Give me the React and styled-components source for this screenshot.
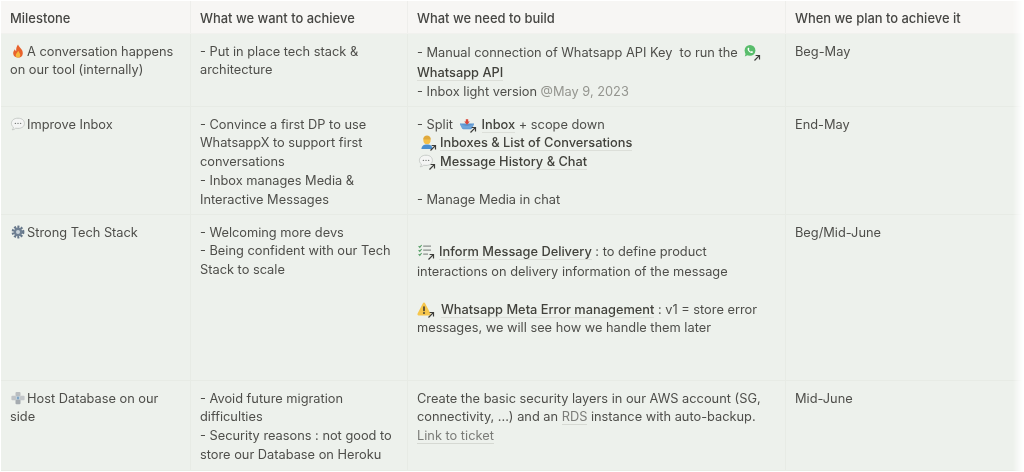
import React from 'react';
import styled, { createGlobalStyle } from 'styled-components';

const GlobalStyle = createGlobalStyle`
    html, body {
        margin: 0;
        padding: 0;
        background: #ffffff;
    }
    body {
        width: 1024px;
        height: 472px;
        overflow: hidden;
        font-family: Inter, "Liberation Sans", sans-serif;
    }
`;

const Page = styled.div`
    padding: 1px 0 0 1px;
    width: 1023px;
    box-sizing: border-box;
`;

const Table = styled.div`
    width: 1022px;
    filter: blur(0.4px);
    mask-image: linear-gradient(to right, #000 99%, transparent 100%);
`;

const Row = styled.div`
    display: grid;
    grid-template-columns: 190px 217px 378px 237px;
    height: ${props => props.height}px;
    box-sizing: border-box;
    background: ${props => props.head ? '#f7f6f4' : '#edf1ec'};
    border-bottom: 1px solid ${props => props.head ? '#f1f1ee' : '#e7ebe5'};
`;

const Cell = styled.div`
    padding: ${props => props.head ? '8px' : '8.6px'} 9px 0 9px;
    border-right: 1px solid ${props => props.head ? '#eeeeeb' : '#e7ebe5'};
    font-size: ${props => props.head ? '12.95px' : '12.8px'};
    line-height: 18.8px;
    font-weight: ${props => props.head ? 500 : 400};
    color: ${props => props.head ? '#464643' : '#4e4e4a'};
    overflow: hidden;
    &:last-child {
        border-right: none;
    }
`;

const Line = styled.div`
    min-height: 18.8px;
    line-height: ${props => props.tall ? '20px' : '18.8px'};
`;

const Gap = styled.div`
    height: ${props => props.size}px;
`;

const Mention = styled.span`
    font-weight: 500;
    color: #42423c;
    border-bottom: 1px solid #dcdfd9;
`;

const Muted = styled.span`
    color: #94958f;
`;

const SoftLink = styled.span`
    color: #7b7c78;
    border-bottom: 1px solid #d6d9d3;
`;

const Glyph = styled.span`
    position: relative;
    display: inline-block;
    width: 16px;
    height: 16px;
    margin-left: ${props => props.lead || 0}px;
    margin-right: ${props => props.gap || 1}px;
    vertical-align: -3px;
    svg {
        display: block;
        width: 16px;
        height: 16px;
    }
`;

const ArrowMark = styled.svg`
    position: absolute;
    right: -2px;
    bottom: -2px;
    && {
        width: 8px;
        height: 8px;
    }
`;

const Icon = ({ children, linked, gap, lead }) => (
    <Glyph gap={gap} lead={lead}>
        <svg viewBox="0 0 16 16">{children}</svg>
        {linked && (
            <ArrowMark viewBox="0 0 8 8">
                <path d="M1.5 6.5 L6.3 1.7 M2.6 1.5 H6.5 V5.4" fill="none" stroke="#3d3d3a" strokeWidth="1.2" />
            </ArrowMark>
        )}
    </Glyph>
);

const Fire = () => (
    <Icon>
        <path d="M8 1.5 C9 4.4 13 6 12.8 10.4 C12.6 13.4 10.4 14.6 8 14.6 C5.4 14.6 3.3 13.2 3.2 10.6 C3.1 8.6 4 7.4 4.8 6.2 C5.1 7.2 5.5 7.8 6.2 8 C6 5.6 6.6 3.2 8 1.5 Z" fill="#e8622c" />
        <path d="M8.2 7.8 C8.8 9.4 10.4 10.4 10.3 12.2 C10.2 13.6 9.2 14.5 8 14.5 C6.6 14.5 5.7 13.6 5.7 12.4 C5.7 10.6 7.6 9.6 8.2 7.8 Z" fill="#f6b73c" />
    </Icon>
);

const Bubble = ({ linked, gap, lead }) => (
    <Icon linked={linked} gap={gap} lead={lead}>
        <path d="M8 2.2 C12 2.2 14.4 4.4 14.4 7.4 C14.4 10.4 12 12.4 8 12.4 C7.2 12.4 6.4 12.3 5.7 12.2 C4.8 13.2 3.4 13.8 2.2 13.8 C3 13 3.4 12 3.4 11.1 C2.2 10.2 1.4 8.9 1.4 7.4 C1.4 4.4 4 2.2 8 2.2 Z" fill="#f4f5f4" stroke="#c2c6c3" strokeWidth="0.9" />
        <circle cx="5.4" cy="7.4" r="0.7" fill="#777b79" />
        <circle cx="8" cy="7.4" r="0.7" fill="#777b79" />
        <circle cx="10.6" cy="7.4" r="0.7" fill="#777b79" />
    </Icon>
);

const Gear = () => (
    <Icon>
        <circle cx="8" cy="8" r="5" fill="none" stroke="#66778a" strokeWidth="2.8" strokeDasharray="1.9 1.3" />
        <circle cx="8" cy="8" r="4.4" fill="#6f8093" />
        <circle cx="8" cy="8" r="2" fill="#c9d2da" />
    </Icon>
);

const Pinwheel = () => (
    <Icon>
        <rect x="5.5" y="2" width="5" height="4.6" rx="1" fill="#b9bdc0" />
        <rect x="1.4" y="5.8" width="4.6" height="4.4" rx="1" fill="#c0c4c7" />
        <rect x="10" y="5.8" width="4.6" height="4.4" rx="1" fill="#c3c7ca" />
        <rect x="5.5" y="9.6" width="5" height="4.6" rx="1" fill="#a5abb0" />
        <rect x="6.6" y="6.6" width="2.8" height="2.8" fill="#7ea4c6" />
    </Icon>
);

const WhatsappGlyph = () => (
    <Icon linked gap={0} lead={2}>
        <circle cx="7" cy="6.4" r="5.4" fill="#58bd6b" />
        <path d="M1.8 12.6 L2.8 9 L5 11 Z" fill="#58bd6b" />
        <path d="M4.8 4 C5.2 3.5 5.8 3.6 6 4.1 L6.4 5 L5.9 5.7 C6.3 6.6 7 7.3 8 7.7 L8.7 7.1 L9.7 7.6 C10 7.8 10 8.3 9.6 8.7 C8.9 9.3 7.8 9.1 6.6 8.3 C5.2 7.3 4 5.2 4.8 4 Z" fill="#ffffff" />
    </Icon>
);

const Tray = () => (
    <Icon linked gap={7} lead={2}>
        <path d="M1 7.5 H15 L12.6 12.6 C12.4 13 12 13.2 11.6 13.2 H4.4 C4 13.2 3.6 13 3.4 12.6 Z" fill="#5b93cf" />
        <path d="M1 7.5 C4 9 5 10 8 10 C11 10 12 9 15 7.5 L15 8.6 L12.8 12.8 H3.2 L1 8.6 Z" fill="#6fa5da" />
        <rect x="6.8" y="3.2" width="2.4" height="4" fill="#d9473b" />
        <path d="M5.2 5.6 H10.8 L8 8.8 Z" fill="#d9473b" />
    </Icon>
);

const Worker = () => (
    <Icon linked gap={5} lead={2}>
        <path d="M2.4 15 C2.6 11.6 4.8 10.4 8 10.4 C11.2 10.4 13.4 11.6 13.6 15 Z" fill="#4b8fd0" />
        <circle cx="8" cy="6.4" r="3.6" fill="#f5c04a" />
        <path d="M4.2 5.4 C4.2 2.6 6 1.4 8 1.4 C10 1.4 11.8 2.6 11.8 5.4 Z" fill="#e0a93c" />
    </Icon>
);

const Checklist = () => (
    <Icon linked gap={6}>
        <path d="M1.6 3.2 L2.8 4.4 L4.6 2 M1.6 7.2 L2.8 8.4 L4.6 6 M1.6 11.2 L2.8 12.4 L4.6 10" fill="none" stroke="#5aa06a" strokeWidth="1.1" />
        <path d="M6.2 3.2 H14 M6.2 7.2 H14 M6.2 11.2 H11" fill="none" stroke="#8a908c" strokeWidth="1.2" />
    </Icon>
);

const Warning = () => (
    <Icon linked gap={8}>
        <path d="M7 1.6 C7.5 1.6 7.9 1.9 8.2 2.4 L13.4 12.6 C13.9 13.5 13.3 14.4 12.4 14.4 H1.6 C0.7 14.4 0.1 13.5 0.6 12.6 L5.8 2.4 C6.1 1.9 6.5 1.6 7 1.6 Z" fill="#f6c64c" />
        <rect x="6.2" y="5.2" width="1.6" height="5" rx="0.7" fill="#3f3a30" />
        <circle cx="7" cy="12" r="0.95" fill="#3f3a30" />
    </Icon>
);

const App = () => (
    <Page>
        <GlobalStyle />
        <Table>
            <Row head height={33}>
                <Cell head>Milestone</Cell>
                <Cell head>What we want to achieve</Cell>
                <Cell head>What we need to build</Cell>
                <Cell head>When we plan to achieve it</Cell>
            </Row>
            <Row height={73}>
                <Cell><Fire />A conversation happens on our tool (internally)</Cell>
                <Cell>- Put in place tech stack &amp; architecture</Cell>
                <Cell>
                    <Line tall>- Manual connection of Whatsapp API Key &nbsp;to run the <WhatsappGlyph /></Line>
                    <Line tall><Mention>Whatsapp API</Mention></Line>
                    <Line>- Inbox light version <Muted>@May 9, 2023</Muted></Line>
                </Cell>
                <Cell>Beg-May</Cell>
            </Row>
            <Row height={108}>
                <Cell><Bubble />Improve Inbox</Cell>
                <Cell>
                    <Line>- Convince a first DP to use WhatsappX to support first conversations</Line>
                    <Line>- Inbox manages Media &amp; Interactive Messages</Line>
                </Cell>
                <Cell>
                    <Line>- Split <Tray /><Mention>Inbox</Mention> + scope down</Line>
                    <Line><Worker /><Mention>Inboxes &amp; List of Conversations</Mention></Line>
                    <Line><Bubble linked gap={6} lead={1} /><Mention>Message History &amp; Chat</Mention></Line>
                    <Line />
                    <Line>- Manage Media in chat</Line>
                </Cell>
                <Cell>End-May</Cell>
            </Row>
            <Row height={166}>
                <Cell><Gear />Strong Tech Stack</Cell>
                <Cell>
                    <Line>- Welcoming more devs</Line>
                    <Line>- Being confident with our Tech Stack to scale</Line>
                </Cell>
                <Cell>
                    <Gap size={18} />
                    <Line tall><Checklist /><Mention>Inform Message Delivery</Mention> : to define product</Line>
                    <Line tall>interactions on delivery information of the message</Line>
                    <Gap size={19} />
                    <Line><Warning /><Mention>Whatsapp Meta Error management</Mention> : v1 = store error</Line>
                    <Line>messages, we will see how we handle them later</Line>
                </Cell>
                <Cell>Beg/Mid-June</Cell>
            </Row>
            <Row height={90}>
                <Cell><Pinwheel />Host Database on our side</Cell>
                <Cell>
                    <Line>- Avoid future migration difficulties</Line>
                    <Line>- Security reasons : not good to store our Database on Heroku</Line>
                </Cell>
                <Cell>
                    <Line>Create the basic security layers in our AWS account (SG,</Line>
                    <Line>connectivity, ...) and an <SoftLink>RDS</SoftLink> instance with auto-backup.</Line>
                    <Line><SoftLink>Link to ticket</SoftLink></Line>
                </Cell>
                <Cell>Mid-June</Cell>
            </Row>
        </Table>
    </Page>
);

export default App;
